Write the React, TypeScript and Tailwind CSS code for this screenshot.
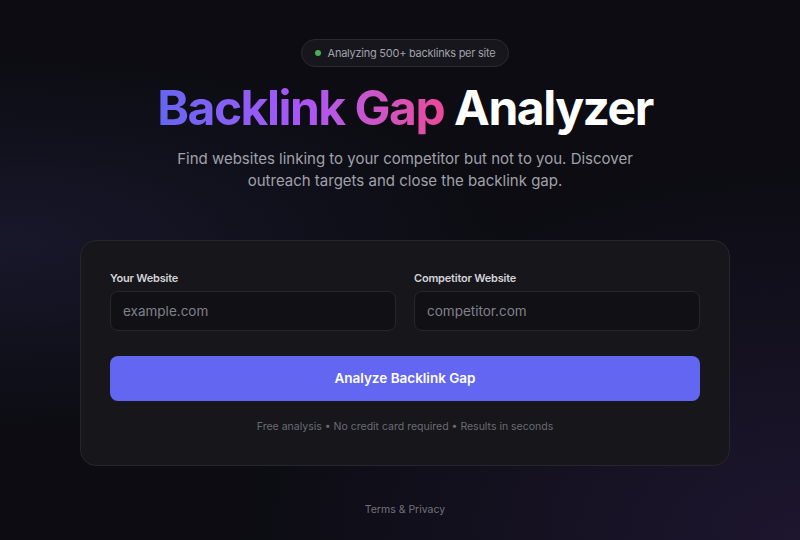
import React from "react";

export default function App() {
  return (
    <div
      className="relative min-h-[540px] w-full overflow-hidden bg-[#0c0c12] text-white"
      style={{ fontFamily: "Inter, 'Noto Sans', sans-serif" }}
    >
      <div className="pointer-events-none absolute inset-0 bg-[radial-gradient(ellipse_at_0%_45%,rgba(40,40,80,0.4),transparent_45%)]" />
      <div className="pointer-events-none absolute inset-0 bg-[radial-gradient(ellipse_at_100%_100%,rgba(60,40,100,0.35),transparent_50%)]" />
      <div className="relative flex flex-col items-center pl-[10px] pt-[39px]">
        <div className="flex h-[28px] items-center gap-[7px] rounded-full border border-[#2a2a33] bg-[#16161c] pl-[13px] pr-[13px]">
          <span className="h-[6px] w-[6px] rounded-full bg-[#4caf50]" />
          <span className="text-[11px] tracking-[-0.25px] text-[#a1a1aa]">Analyzing 500+ backlinks per site</span>
        </div>
        <h1 className="mt-[11px] text-[48px] font-bold leading-[60px] tracking-[-1.5px]">
          <span className="bg-gradient-to-r from-[#6366f1] via-[#a855f7] to-[#ec4899] bg-clip-text text-transparent">
            Backlink Gap
          </span>{" "}
          <span className="text-white">Analyzer</span>
        </h1>
        <p className="mt-[10px] w-[480px] text-center text-[15px] leading-[22px] text-[#a1a1aa]">
          Find websites linking to your competitor but not to you. Discover outreach targets and close the backlink gap.
        </p>
        <div className="mt-[48px] w-[650px] rounded-[16px] border border-[#26262e] bg-[#16161b] p-[29px] pb-[31px]">
          <div className="grid grid-cols-2 gap-[18px]">
            <div className="flex flex-col">
              <label className="text-[11px] font-semibold leading-[16px] tracking-[-0.2px] text-[#d4d4d8]">Your Website</label>
              <input
                placeholder="example.com"
                className="mt-[5px] h-[40px] rounded-[8px] border border-[#26262e] bg-[#101015] px-[12px] text-[13.5px] text-white outline-none placeholder:text-[#80808a]"
              />
            </div>
            <div className="flex flex-col">
              <label className="text-[11px] font-semibold leading-[16px] tracking-[-0.2px] text-[#d4d4d8]">Competitor Website</label>
              <input
                placeholder="competitor.com"
                className="mt-[5px] h-[40px] rounded-[8px] border border-[#26262e] bg-[#101015] px-[12px] text-[13.5px] text-white outline-none placeholder:text-[#80808a]"
              />
            </div>
          </div>
          <button className="mt-[25px] flex h-[45px] w-full items-center justify-center rounded-[8px] bg-[#6366f1] text-[13.5px] font-semibold text-white">
            Analyze Backlink Gap
          </button>
          <p className="mt-[19px] text-center text-[10.5px] leading-[14px] text-[#6b6b75]">
            Free analysis • No credit card required • Results in seconds
          </p>
        </div>
        <p className="mt-[36px] text-[10.5px] text-[#71717a]">Terms &amp; Privacy</p>
      </div>
    </div>
  );
}
